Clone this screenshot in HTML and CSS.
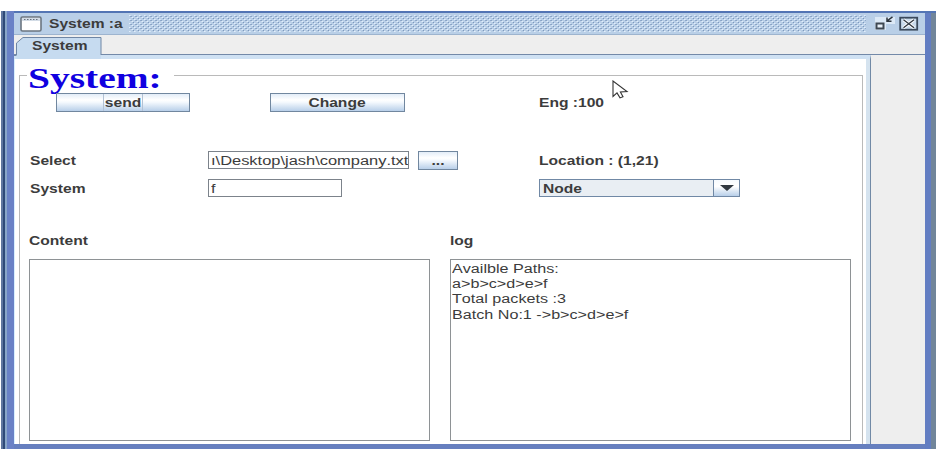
FILE: index.html
```html
<!DOCTYPE html>
<html lang="en">
<head>
  <meta charset="UTF-8">
  <title>System :a</title>
  <link rel="stylesheet" href="styles.css">
</head>
<body>
  <div class="window">
    <div class="edge-left"></div>
    <div class="frame">
      <div class="titlebar">
        <svg class="win-icon" width="22" height="16" viewBox="0 0 22 16">
          <rect x="1" y="1" width="20" height="14" rx="1.5" fill="#fff" stroke="#6b7580" stroke-width="1.6"/>
          <rect x="2" y="2" width="18" height="3" fill="#d3dce6"/>
          <path d="M4 3.5h14" stroke="#66717e" stroke-dasharray="1.5 1.5"/>
        </svg>
        <span class="title"><span class="wide">System :a</span></span>
        <svg class="grip" width="737" height="17">
          <defs>
            <pattern id="dots" width="5" height="4" patternUnits="userSpaceOnUse">
              <rect width="5" height="4" fill="#b9cfe7"/>
              <rect x="0" y="0" width="1.6" height="1" fill="#e2eefb"/>
              <rect x="1.3" y="1" width="1.5" height="1" fill="#7c98bd"/>
              <rect x="2.5" y="2" width="1.6" height="1" fill="#e2eefb"/>
              <rect x="3.8" y="3" width="1.2" height="1" fill="#7c98bd"/>
            </pattern>
          </defs>
          <rect width="737" height="17" fill="url(#dots)"/>
        </svg>
        <svg class="win-buttons" width="44" height="16" viewBox="0 0 44 16">
          <path d="M0 1h20v7h-9v6H0z" fill="#dce9f6"/>
          <rect x="1.5" y="7.5" width="7" height="5" fill="#e8f0f8" stroke="#3e4852" stroke-width="2"/>
          <path d="M17.5 .8L12 5M12 1.5v3.8h4.5" fill="none" stroke="#2d353d" stroke-width="1.5"/>
          <rect x="25.2" y="1.7" width="17" height="12" fill="#c9dbec" stroke="#3b4a5c" stroke-width="1.8"/>
          <path d="M28.5 3.8l10.5 8M39 3.8l-10.5 8" stroke="#fff" stroke-width="3"/>
          <path d="M28.5 3.8l10.5 8M39 3.8l-10.5 8" stroke="#303943" stroke-width="1.4"/>
        </svg>
      </div>

      <div class="tabs">
        <svg class="tab-shape" width="88" height="24" viewBox="0 0 88 24">
          <path d="M2.5 24V8L9 2.5h78V24z" fill="#c6dbf0"/>
          <path d="M2.5 20V8L9 2.5h78V20" fill="none" stroke="#6f86a5"/>
          <path d="M0 20.5h2.5" stroke="#6f86a5"/>
        </svg>
        <span class="wide tab-text">System</span>
      </div>

      <div class="panel">
        <div class="group">
          <div class="legend"><span>System:</span></div>

          <div class="row row-buttons">
            <button class="btn send"><span class="focus"><span class="wide mid">send</span></span></button>
            <button class="btn change"><span class="wide mid">Change</span></button>
            <div class="side"><span class="wide">Eng :100</span></div>
          </div>

          <div class="row row-file">
            <label class="name"><span class="wide">Select</span></label>
            <div class="field file"><span class="plain">ı\Desktop\jash\company.txt</span></div>
            <button class="btn browse"><span class="wide mid">...</span></button>
            <div class="side"><span class="wide">Location : (1,21)</span></div>
          </div>

          <div class="row row-target">
            <label class="name"><span class="wide">System</span></label>
            <div class="field target"><span class="plain">f</span></div>
            <div class="combo">
              <span class="wide">Node</span>
              <div class="combo-arrow">
                <svg width="14" height="6" viewBox="0 0 14 6"><path d="M0 0h14L7 6z" fill="#303840"/></svg>
              </div>
            </div>
          </div>

          <div class="areas">
            <div class="area-col">
              <label><span class="wide">Content</span></label>
              <div class="area"></div>
            </div>
            <div class="area-col">
              <label><span class="wide">log</span></label>
              <div class="area">
                <p><span class="plain">Availble Paths:</span></p>
                <p><span class="plain">a&gt;b&gt;c&gt;d&gt;e&gt;f</span></p>
                <p><span class="plain">Total packets :3</span></p>
                <p><span class="plain">Batch No:1 -&gt;b&gt;c&gt;d&gt;e&gt;f</span></p>
              </div>
            </div>
          </div>
        </div>
      </div>
    </div>
    <div class="edge-right"></div>
  </div>

  <svg class="cursor" width="18" height="20" viewBox="0 0 18 20">
    <path d="M1 1v15.5l4-3.6 3 5 3-1.2-2.6-4.8 6.6-.4z" fill="#fff" stroke="#333" stroke-width="1.1"/>
  </svg>
</body>
</html>
```
FILE: styles.css
```css
* {
  box-sizing: border-box;
  margin: 0;
  padding: 0;
}

body {
  width: 942px;
  height: 452px;
  overflow: hidden;
  background: #fff;
  color: #3c3c3c;
  font: 12px/15px "Liberation Sans", Arial, sans-serif;
}

/* window frame */
.window {
  display: flex;
  width: 935px;
  height: 438px;
  margin: 11px 0 0 1px;
}

.edge-left {
  width: 13px;
  background: linear-gradient(to right, #60769f 0 2px, #2f4a78 2px 4px, #8aa6c8 4px 6px, #6a81c6 6px);
}

.edge-right {
  width: 11px;
  border-top: 2px solid #5375b4;
  background: linear-gradient(to right, #627dc2 0 6px, #71859a 6px);
}

.frame {
  flex: 1;
  display: flex;
  flex-direction: column;
  background: #eee;
  border-top: 2px solid #5375b4;
  border-bottom: 5px solid #667fbf;
}

.titlebar {
  display: flex;
  align-items: center;
  height: 22px;
  padding-left: 6px;
  background: #b9cfe7;
  border-bottom: 1px solid #9db4cf;
}

.title {
  width: 87px;
  padding: 2px 0 0 7px;
}

.title,
.win-icon,
.grip,
.win-buttons {
  flex: none;
}

.win-buttons {
  margin-left: 9px;
}

/* stretched text */
.wide,
.plain {
  display: inline-block;
  transform: scaleX(1.3);
  transform-origin: left center;
  white-space: nowrap;
  font-kerning: none;
}

.wide {
  font-weight: bold;
}

.plain {
  transform: scaleX(1.345);
}

.mid {
  transform-origin: center;
}

/* tab */
.tabs {
  display: flex;
  height: 20px;
  background: linear-gradient(#eee 19px, #7389a8 19px);
}

.tab-shape {
  position: relative;
  z-index: 1;
}

.tab-text {
  position: relative;
  z-index: 2;
  height: 15px;
  margin: 4px 0 0 -70px;
}

.panel {
  flex: 1;
  width: 857px;
  padding: 16px 4px 0 5px;
  background: #fff;
  border-top: 4px solid #cfe1f3;
  border-right: 1px solid #7189a5;
  box-shadow: inset -4px 0 #d5e3ef, inset 1px 0 #d8efff;
}

.group {
  height: 100%;
  width: 844px;
  border: 1px solid #bababa;
  border-bottom: 0;
  padding: 17px 0 0 9px;
  position: relative;
}

.legend {
  position: absolute;
  left: 7px;
  top: -14px;
  width: 147px;
  height: 31px;
  padding-left: 1px;
  background: #fff;
  color: #1000e0;
  font: bold 29px/32px "Liberation Serif", "Times New Roman", serif;
}

.legend span {
  display: inline-block;
  transform: scaleX(1.36);
  transform-origin: left;
}

/* rows */
.row {
  display: flex;
  height: 19px;
  position: relative;
}

.row-file {
  margin-top: 39px;
}

.row-target {
  margin-top: 9px;
}

.btn {
  display: flex;
  align-items: center;
  justify-content: center;
  height: 19px;
  padding-top: 2px;
  border: 1px solid #71879f;
  background: linear-gradient(#e3edf8, #fff 35%, #f3f8fd 50%, #b8cfe9);
  color: #3c3c3c;
  font: 12px/15px "Liberation Sans", Arial, sans-serif;
}

.send {
  width: 134px;
  margin-left: 27px;
  padding-top: 0;
}

.focus {
  width: 40px;
  height: 17px;
  padding-top: 2px;
  border: 1px solid #b3c2d5;
  border-top: 0;
  border-bottom: 0;
}

.change {
  width: 135px;
  margin-left: 80px;
}

.browse {
  width: 40px;
  margin-left: 9px;
}

.side {
  padding-top: 3px;
}

.row-buttons .side {
  margin-left: 134px;
}

.row-file .side {
  margin-left: 81px;
}

.name {
  width: 179px;
  padding: 3px 0 0 1px;
}

.field {
  height: 18px;
  padding: 2px 0 0 2px;
  border: 1px solid #7c838b;
  overflow: hidden;
}

.file {
  width: 201px;
}

.file .plain {
  transform: scaleX(1.37);
}

.target {
  width: 134px;
}

.combo {
  display: flex;
  justify-content: space-between;
  width: 201px;
  height: 18px;
  margin-left: 197px;
  padding: 2px 0 0 3px;
  border: 1px solid #7088a5;
  background: #e9eef3;
}

.combo-arrow {
  display: flex;
  align-items: center;
  justify-content: center;
  width: 26px;
  height: 16px;
  margin-top: -2px;
  border-left: 1px solid #7088a5;
  background: linear-gradient(#f6fafe, #fff 40%, #b8cfe9);
}

/* text areas */
.areas {
  display: flex;
  gap: 20px;
  margin-top: 35px;
}

.area-col {
  width: 401px;
}

.area-col label {
  display: block;
  height: 26px;
  padding-top: 1px;
}

.area {
  height: 182px;
  padding: 2px 0 0 1px;
  border: 1px solid #8e9295;
}

.area p {
  height: 15.2px;
  line-height: 15px;
}

.cursor {
  position: absolute;
  left: 612px;
  top: 80px;
}
```
